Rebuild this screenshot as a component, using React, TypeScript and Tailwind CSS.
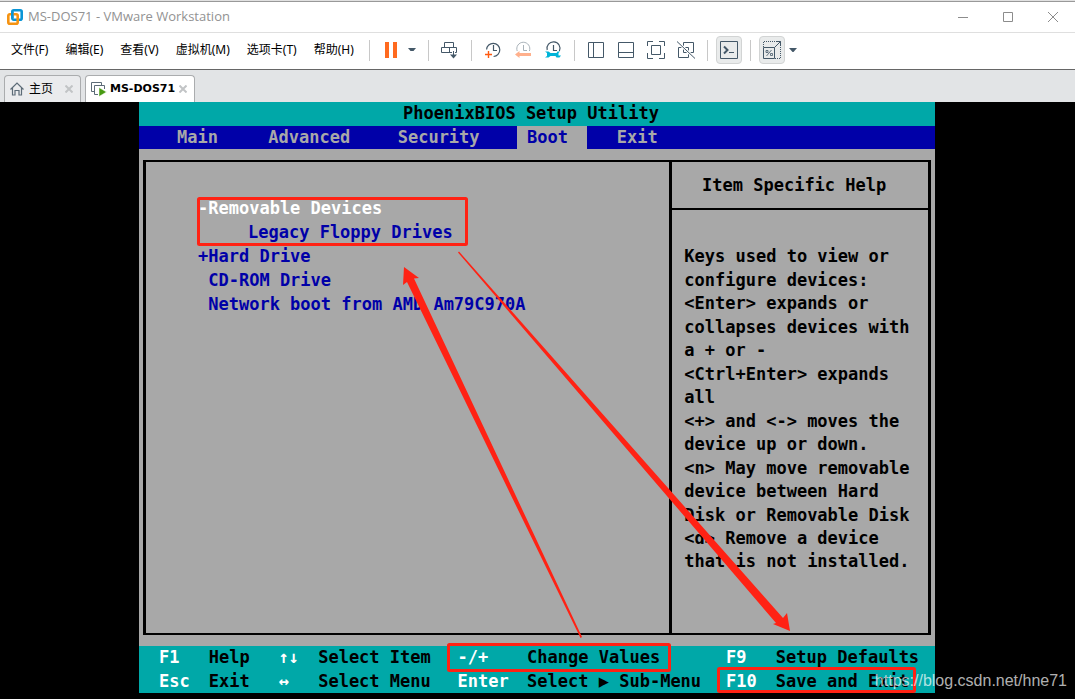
import type { ReactNode } from "react"

const menus = ["文件(F)", "编辑(E)", "查看(V)", "虚拟机(M)", "选项卡(T)", "帮助(H)"]

const helpLines = [
    "Keys used to view or",
    "configure devices:",
    "<Enter> expands or",
    "collapses devices with",
    "a + or -",
    "<Ctrl+Enter> expands",
    "all",
    "<+> and <-> moves the",
    "device up or down.",
    "<n> May move removable",
    "device between Hard",
    "Disk or Removable Disk",
    "<d> Remove a device",
    "that is not installed.",
]

const keyRows = [
    ["F1", "Help", "↑↓", "Select Item", "-/+", "Change Values", "F9", "Setup Defaults"],
    ["Esc", "Exit", "↔", "Select Menu", "Enter", "Select ▶ Sub-Menu", "F10", "Save and Exit"],
]

export default function App() {
    return (
        <div className="flex min-h-screen flex-col bg-[#e1e1e1] pt-px font-['Open_Sans','Noto_Sans_CJK_SC',sans-serif] text-black">
            <TitleBar />
            <MenuBar />
            <TabStrip />
            <main className="relative flex flex-1 flex-col bg-black pr-px pb-[6px]">
                <BiosScreen />
                <div className="absolute right-2 bottom-[6px] font-['Liberation_Sans',sans-serif] text-base leading-6 text-white/70">
                    https://blog.csdn.net/hne71
                </div>
            </main>
        </div>
    )
}

function TitleBar() {
    return (
        <header className="flex h-8 items-center border-t border-b border-t-[#999] border-b-[#dfdfdf] bg-white pl-[7px]">
            <svg className="h-4 w-4" viewBox="0 0 16 16" fill="none" strokeWidth="2.6">
                <rect x="5.3" y="1.3" width="9.4" height="9.4" rx="1.5" stroke="#0a95d6" />
                <rect x="1.3" y="5.3" width="9.4" height="9.4" rx="1.5" stroke="#f59312" />
                <path d="M5.3 8V2.8M5.3 7.5V9" stroke="#0a95d6" />
            </svg>
            <h1 className="ml-[5px] flex-1 text-[13px] text-[#929292]">MS-DOS71 - VMware Workstation</h1>
            <div className="flex text-[#8c8c8c]">
                <WindowButton label="Minimize"><path d="M0 5.5h10" /></WindowButton>
                <WindowButton label="Maximize"><path d="M.5.5h9v9h-9z" /></WindowButton>
                <WindowButton label="Close"><path d="M0 0l10 10M10 0L0 10" /></WindowButton>
            </div>
        </header>
    )
}

function WindowButton({ label, children }: { label: string; children: ReactNode }) {
    return (
        <button aria-label={label} className="flex h-[30px] w-[45px] items-center justify-center">
            <svg className="h-[10px] w-[10px]" viewBox="0 0 10 10" fill="none" stroke="currentColor">{children}</svg>
        </button>
    )
}

function MenuBar() {
    return (
        <div className="flex h-[37px] items-center border-b border-[#666] bg-white pb-[2px] text-[#445868]">
            <nav className="flex gap-[17px] pr-1 pb-px pl-[11px] font-['Noto_Sans','Noto_Sans_CJK_SC',sans-serif] text-xs text-black">
                {menus.map((text) => (
                    <button key={text} className="whitespace-nowrap">{text}</button>
                ))}
            </nav>
            <Separator />
            <Tool label="Suspend">
                <path d="M4 2h4v16H4zM12 2h4v16h-4z" fill="#ff6a1f" stroke="none" />
            </Tool>
            <Tool label="Power options">
                <path d="M7 8h8l-2.500 3h-3z" fill="currentColor" stroke="none" />
            </Tool>
            <div className="mr-[11px] ml-[7px] h-[21px] w-px bg-[#c8c8c8]" />
            <Tool label="Send Ctrl+Alt+Del">
                <path d="M4.500 2.500h9v5h-9zM1.500 7.500h15v5h-15zM9.500 7.500v5" />
                <path d="M13.500 11v5" stroke="#fff" strokeWidth="3" />
                <path d="M13.500 11v5" />
                <path d="M10 14.500h7l-3.500 4z" fill="currentColor" stroke="none" />
            </Tool>
            <Separator />
            <div className="flex gap-[10px]">
                <Tool label="Take snapshot">
                    <path d="M3.600 9.500a6.600 6.600 0 1 1 7 7M10.500 5v5.500H14" strokeWidth="1.200" />
                    <path d="M5.500 11v7M2 14.500h7" stroke="#ff5a10" strokeWidth="1.400" />
                </Tool>
                <Tool label="Revert snapshot">
                    <path d="M4.200 11a6.500 6.500 0 1 1 12.200 0M10.500 5v5.500H14" stroke="#a9b2b9" />
                    <path d="M2 14.500l4.500-3.500v2H18v3H6.500v2z" fill="#ffb08c" stroke="none" />
                </Tool>
                <Tool label="Manage snapshots">
                    <path d="M4.200 10a6.500 6.500 0 1 1 12.200 1M10.500 5v5.500H14" strokeWidth="1.200" />
                    <path d="M2 11.500h3.500l2 1.500h6l1-1.500H17l-1.500 1.500v2.500H18l-1.500 2h-3l-1-1.500h-5l-2 1.500H2l2-1.500v-3z" fill="#00b4d8" stroke="none" />
                </Tool>
            </div>
            <Separator />
            <div className="flex gap-[10px]">
                <Tool label="Show library"><path d="M2.500 2.500h15v15h-15zM7.500 2.500v15" /></Tool>
                <Tool label="Show thumbnails"><path d="M2.500 2.500h15v15h-15zM2.500 12.500h15" /></Tool>
                <Tool label="Full screen">
                    <path d="M1.500 6V1.500H7M13 1.500h5.500V6M18.500 13v5.500H13M7 18.500H1.500V13M5.500 5.500h9v9h-9z" />
                </Tool>
                <Tool label="Unity">
                    <path d="M7.500 2.500h10v10h-10zM2.500 7.500h10v10h-10z" />
                    <path d="M1 1.500l18 17" stroke="#fff" strokeWidth="3" />
                    <path d="M1 1.500l18 17" />
                </Tool>
            </div>
            <Separator />
            <div className="-mx-[3px] flex h-[28px] w-[26px] items-center justify-center rounded border border-[#d2d4d4] bg-[#e9ebeb]">
                <Tool label="Console view">
                    <path d="M1.500 1.500h17v17h-17zM10 12.500h5" />
                    <path d="M5 6.500l3.500 3.500L5 13.500" strokeWidth="2" />
                </Tool>
            </div>
            <Separator />
            <div className="-ml-[3px] flex h-[28px] w-[26px] items-center justify-center rounded border border-[#d2d4d4] bg-[#e9ebeb]">
                <Tool label="Stretch guest">
                    <path d="M1.500 7V1.500h17v17H13" strokeDasharray="1 1" />
                    <path d="M1.500 7.500h11v11h-11zM12.500 7.500l5.500-5.500M14 1.500h4.500V6" />
                    <path d="M4 10.500h2v2H4zM8.500 13.500h2v2h-2zM9.500 10l-5 6" strokeWidth=".8" />
                </Tool>
            </div>
            <button aria-label="Stretch options" className="flex h-5 w-4 items-center justify-center">
                <svg className="h-1 w-2" viewBox="0 0 8 4"><path d="M0 0h8L4.500 4h-1z" fill="currentColor" /></svg>
            </button>
        </div>
    )
}

function Separator() {
    return <div className="mx-[11px] h-[21px] w-px shrink-0 bg-[#c8c8c8]" />
}

function Tool({ label, children }: { label: string; children: ReactNode }) {
    return (
        <button aria-label={label} className="h-5 w-5 shrink-0">
            <svg className="h-5 w-5" viewBox="0 0 20 20" fill="none" stroke="currentColor">{children}</svg>
        </button>
    )
}

function TabStrip() {
    return (
        <div className="flex h-8 items-end gap-1 bg-[#e2e4e6] pl-1 text-xs">
            <div className="flex h-[27px] w-[77px] items-center rounded-t border border-b-0 border-[#aaacae] bg-[#eaebed] pl-[5px]">
                <svg className="h-[14px] w-[14px]" viewBox="0 0 14 14" fill="none" stroke="#5c6b77" strokeWidth="1.200">
                    <path d="M.5 7.500L7 1l6.500 6.500M2.500 6v7H5V8.500h4V13h2.500V6" />
                </svg>
                <button className="ml-[5px]">主页</button>
                <CloseTab />
            </div>
            <div className="flex h-[27px] w-[110px] items-center rounded-t border border-b-0 border-[#aaacae] bg-white pl-[5px]">
                <svg className="h-4 w-4" viewBox="0 0 16 16" fill="none" stroke="#5c6b77">
                    <path d="M3 10.500H.5v-9h10V4M7 13.500H3.500v-9h10V8" />
                    <path d="M8 6.500l7.500 4.500L8 15.500z" fill="#479a12" stroke="#fff" strokeWidth=".5" />
                </svg>
                <button className="ml-[3px] font-['DejaVu_Sans',sans-serif] text-[11px] font-bold">MS-DOS71</button>
                <CloseTab />
            </div>
        </div>
    )
}

function CloseTab() {
    return (
        <button aria-label="Close tab" className="mr-[7px] ml-auto">
            <svg className="h-2 w-2" viewBox="0 0 8 8" stroke="#c2c4c6" strokeWidth="2"><path d="M.5.5l7 7M7.500.5l-7 7" /></svg>
        </button>
    )
}

function BiosScreen() {
    return (
        <div className="relative mx-auto grid w-full max-w-[796px] flex-1 grid-rows-[1fr_1fr_21fr_2fr] bg-[#a8a8a8] font-['DejaVu_Sans_Mono',monospace] text-[17px] leading-6 font-bold whitespace-pre">
            <div className="flex items-center justify-center bg-[#00a8a8]">
                <h2 className="pr-3 leading-[23px]">PhoenixBIOS Setup Utility</h2>
            </div>
            <nav className="grid grid-cols-[13fr_13fr_12fr_7fr_35fr] items-center bg-[#0000a8] leading-[23px] text-[#a8a8a8]">
                <span className="pl-[38px]">Main</span>
                <span>Advanced</span>
                <span>Security</span>
                <span className="bg-[#a8a8a8] pl-[10px] text-[#0000a8]">Boot</span>
                <span className="pl-[30px]">Exit</span>
            </nav>
            <div className="flex px-1 py-[11px]">
                <div className="grid flex-1 grid-cols-[526fr_260fr] border-x-3 border-y-2 border-black">
                    <section className="min-w-0 pt-[34px] pl-[52px] text-[#0000a8]">
                        <div className="text-white">-Removable Devices</div>
                        <div className="pl-[50px]">Legacy Floppy Drives</div>
                        <div>+Hard Drive</div>
                        <div> CD-ROM Drive</div>
                        <div> Network boot from AMD Am79C970A</div>
                    </section>
                    <section className="flex min-w-0 flex-col border-l-3 border-black">
                        <h3 className="border-b-2 border-black py-[11px] pr-3 text-center">Item Specific Help</h3>
                        <div className="grid flex-1 auto-rows-fr items-center pt-[35px] pb-[59px] pl-3 leading-[23px]">
                            {helpLines.map((line) => (
                                <div key={line}>{line}</div>
                            ))}
                        </div>
                    </section>
                </div>
            </div>
            <footer className="grid auto-rows-fr bg-[#00a8a8] pl-5 leading-[23px]">
                {keyRows.map((row) => (
                    <div key={row[0]} className="grid grid-cols-[5fr_7fr_4fr_14fr_7fr_20fr_5fr_16fr] items-center">
                        {row.map((text, cnt) => (
                            <span key={text} className={cnt % 2 === 0 ? "min-w-0 text-white" : "min-w-0"}>{text}</span>
                        ))}
                    </div>
                ))}
            </footer>
            <Annotations />
        </div>
    )
}

// red boxes and arrows drawn over the setup screen
function Annotations() {
    return (
        <svg className="pointer-events-none absolute inset-0 h-full w-full" viewBox="0 0 796 591" fill="none">
            <g stroke="#ff2214" strokeWidth="3">
                <rect x="59.500" y="96.500" width="268" height="46" rx="1" />
                <rect x="309.500" y="542.500" width="221" height="26" rx="1" />
                <rect x="579.500" y="566.500" width="196" height="23" rx="1" />
            </g>
            <g fill="#ff2214">
                <path d="M265 165L280 176L275 176.500L443 535L441.500 536L268 180L264 183z" />
                <path d="M319 150.500L320 149.500L644 516L648 511L651 529L634 522L637 521z" />
            </g>
        </svg>
    )
}
